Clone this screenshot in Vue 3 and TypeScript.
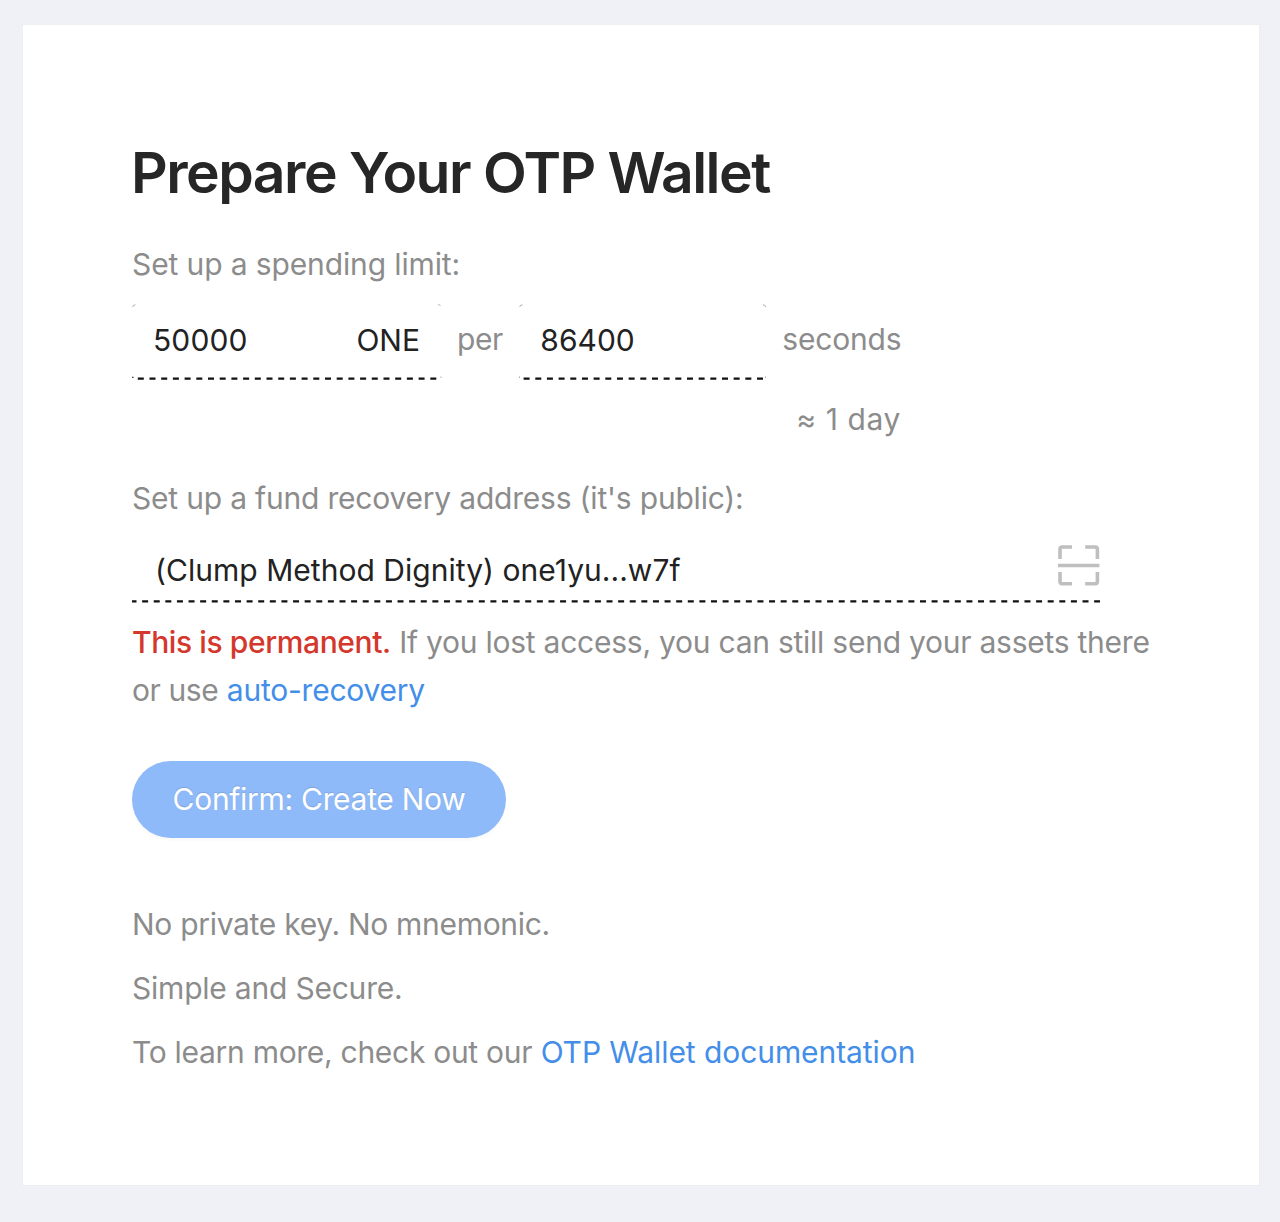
<script setup lang="ts">
import { ref } from 'vue'

const spendingLimit = ref('50000')
const interval = ref('86400')
const recoveryAddress = ref('(Clump Method Dignity) one1yu...w7f')
</script>

<template>
  <main class="page">
    <section class="card">
      <h1 class="title">Prepare Your OTP Wallet</h1>

      <div class="text label-limit">Set up a spending limit:</div>
      <div class="limit-row">
        <div class="field field-amount">
          <span class="value amount">{{ spendingLimit }}</span>
          <span class="value unit">ONE</span>
          <svg class="frame" width="310" height="77" viewBox="0 0 310 77" fill="none">
            <path class="tick" d="M.7 3 Q1 .8 3.5 .8 M306 .8 Q308 .8 308.5 1.6" />
            <path class="dot" d="M0 73.4h1.6" />
            <path class="dot faint" d="M308.5 73.2h1" />
            <path class="dash" d="M5.8 74.6H305.6" stroke-dasharray="6 5.7" />
          </svg>
        </div>
        <span class="text per">per</span>
        <div class="field field-interval">
          <span class="value interval">{{ interval }}</span>
          <svg class="frame" width="248" height="77" viewBox="0 0 248 77" fill="none">
            <path class="tick" d="M.7 3 Q1 .8 3.5 .8 M244 .8 Q246.5 .8 246.8 3" />
            <path class="dot faint" d="M0 73.2h1 M246 73.2h1" />
            <path class="dash" d="M4.6 74.6H244" stroke-dasharray="6 5.67" />
          </svg>
        </div>
        <span class="text seconds">seconds</span>
      </div>
      <div class="text duration">≈ 1 day</div>

      <div class="text label-recovery">Set up a fund recovery address (it's public):</div>
      <div class="address">
        <span class="value address-value">{{ recoveryAddress }}</span>
        <svg class="scan" width="42" height="42" viewBox="0 0 42 42" fill="none">
          <path
            d="M2 14V4.2Q2 2 4.2 2H14 M27.2 2H37.2Q39.4 2 39.4 4.2V14 M2 27V36.6Q2 38.8 4.2 38.8H14 M27.2 38.8H37.2Q39.4 38.8 39.4 36.6V27 M0 20.5H41.4"
            stroke="#bfbfbf"
            stroke-width="3.6"
          />
        </svg>
        <svg class="underline" width="968" height="3" viewBox="0 0 968 3" fill="none">
          <path class="dash" d="M0 1.4H968" stroke-dasharray="6 5.61" stroke-dashoffset="1.5" />
        </svg>
      </div>
      <p class="text note">
        <span class="danger">This is permanent.</span> <span class="note-body">If you lost access, you can still send your assets there</span><br />
        <span class="or-use">or use</span> <a class="link recovery-link">auto-recovery</a>
      </p>

      <button class="confirm" type="button">Confirm: Create Now</button>

      <div class="about">
        <div class="text no-key">No private key. No mnemonic.</div>
        <div class="text simple">Simple and Secure.</div>
        <div class="text">
          <span class="learn">To learn more, check out our</span> <a class="link docs-link">OTP Wallet documentation</a>
        </div>
      </div>
    </section>
  </main>
</template>

<style>
body {
  background: #f0f2f5;
}
</style>

<style scoped>
.page {
  box-sizing: border-box;
  height: 1222px;
  padding: 25px 21px 37px 23px;
  background: #eff1f6;
  font-family: Inter, "Liberation Sans", sans-serif;
}
.card {
  box-sizing: border-box;
  height: 1160px;
  padding: 113px 60px 0 109px;
  background: #fff;
  box-shadow: 0 0 0 1px #eeeff2;
}
.title {
  margin: 0;
  margin-left: -1px;
  font-size: 57px;
  line-height: 70px;
  font-weight: 600;
  letter-spacing: -1.53px;
  color: #262626;
  white-space: nowrap;
}
.text,
.value {
  font-size: 30px;
  line-height: 48px;
  white-space: nowrap;
}
.text {
  color: #8c8c8c;
}
.value {
  color: #222;
}
.label-limit {
  margin-top: 32px;
  letter-spacing: -0.12px;
}
.limit-row {
  display: flex;
  align-items: flex-start;
  margin-top: 16px;
  height: 77px;
}
.field {
  position: relative;
  box-sizing: border-box;
  display: flex;
  justify-content: space-between;
  height: 77px;
  padding: 12px 22px 0 21px;
}
.field-amount {
  width: 310px;
}
.amount {
  letter-spacing: 0.12px;
}
.field-interval {
  width: 248px;
  margin-left: 16.4px;
}
.frame {
  position: absolute;
  left: 0;
  top: 0;
}
.dash {
  stroke: #111;
  stroke-width: 2.2;
}
.tick {
  stroke: #999;
  stroke-width: 0.8;
}
.dot {
  stroke: #444;
  stroke-width: 1.4;
}
.faint {
  stroke: #aaa;
}
.per {
  margin: 11px 0 0 15px;
  letter-spacing: -0.4px;
}
.seconds {
  margin: 11px 0 0 15px;
  letter-spacing: -0.2px;
}
.duration {
  width: 769px;
  margin-top: 14px;
  text-align: right;
  letter-spacing: 0.6px;
}
.label-recovery {
  margin-top: 31px;
  letter-spacing: -0.2px;
}
.address {
  display: flex;
  flex-wrap: wrap;
  align-content: flex-start;
  align-items: flex-start;
  justify-content: space-between;
  width: 968px;
  height: 81px;
  margin-top: 23px;
}
.address-value {
  margin: 1px 0 0 23px;
  letter-spacing: 0.03px;
}
.scan {
  display: block;
}
.underline {
  display: block;
  margin-top: 6px;
}
.note {
  margin: -8px 0 0;
}
.danger {
  color: #d4372c;
  font-weight: 500;
  letter-spacing: -0.4px;
}
.note-body {
  letter-spacing: -0.245px;
}
.or-use {
  letter-spacing: -0.4px;
}
.link {
  color: #438ee8;
  cursor: pointer;
}
.recovery-link {
  letter-spacing: -0.23px;
}
.confirm {
  display: block;
  width: 374px;
  height: 77px;
  margin-top: 47px;
  padding: 0;
  border: 0;
  border-radius: 39px;
  background: #8fbaf9;
  box-shadow: 0 3px 2px rgba(0, 0, 0, 0.02);
  color: #fff;
  font-family: inherit;
  font-size: 30px;
  line-height: 77px;
  letter-spacing: -0.3px;
  text-shadow: 0 -1px 1px rgba(0, 0, 0, 0.12);
  white-space: nowrap;
}
.about {
  display: flex;
  flex-direction: column;
  gap: 16px;
  margin-top: 62px;
}
.no-key {
  letter-spacing: -0.3px;
}
.simple {
  letter-spacing: -0.214px;
}
.learn {
  letter-spacing: -0.29px;
}
.docs-link {
  letter-spacing: -0.077px;
}
</style>
